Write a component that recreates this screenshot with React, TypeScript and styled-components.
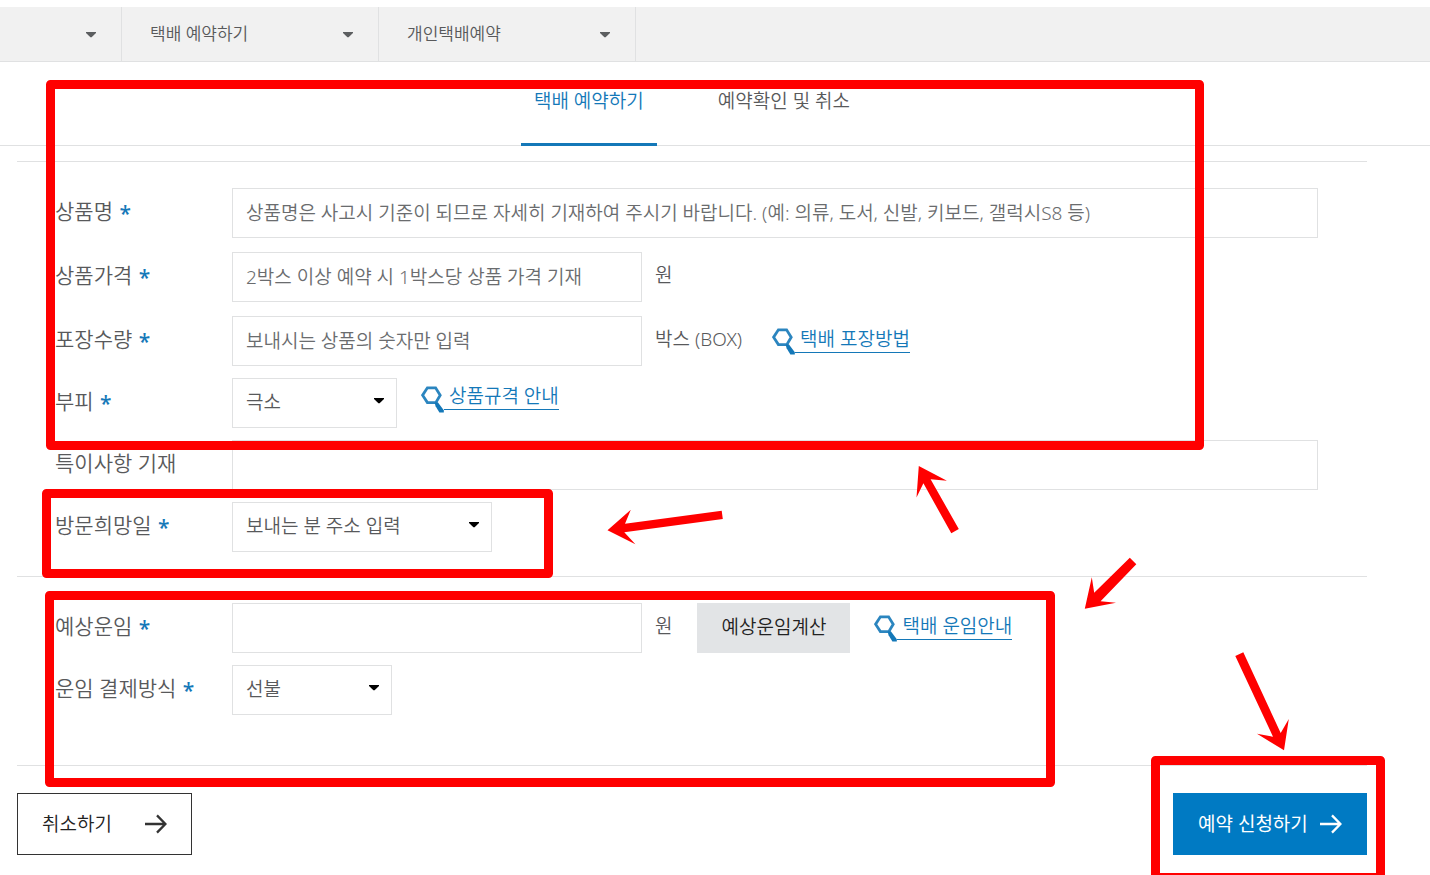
import React from "react";
import styled, { createGlobalStyle } from "styled-components";

const blue = "#1478b8";
const line = "#e0e1e2";

const GlobalStyle = createGlobalStyle`
  * { box-sizing: border-box; }
  body {
    margin: 0;
    background: #fff;
    color: #58595b;
    font-family: "Noto Sans", "Noto Sans CJK KR", sans-serif;
    font-size: 19px;
    font-weight: 350;
    line-height: 28px;
  }
  button, input, select { font: inherit; color: inherit; margin: 0; }
`;

const Page = styled.div`
  position: relative;
  min-height: 100vh;
  padding-top: 7px;
  overflow: hidden;
`;

const Breadcrumb = styled.nav`
  display: flex;
  height: 55px;
  background: #f1f1f1;
  border-bottom: 1px solid ${line};
`;

const Crumb = styled.button<{ $short?: boolean }>`
  display: flex;
  align-items: center;
  justify-content: space-between;
  width: ${(p) => (p.$short ? 122 : 257)}px;
  padding: 0 25px 0 28px;
  border: 0;
  border-right: 1px solid ${line};
  background: none;
  font-size: 17px;
  text-align: left;
  > svg { margin-top: 2px; }
`;

const TabBar = styled.nav`
  display: flex;
  justify-content: center;
  gap: 48px;
  height: 84px;
  padding: 0 63px 0 17px;
  border-bottom: 1px solid ${line};
`;

const Tab = styled.a<{ $active?: boolean }>`
  height: 84px;
  padding: 25px 13px 0;
  border-bottom: 3px solid ${(p) => (p.$active ? blue : "transparent")};
  color: ${(p) => (p.$active ? blue : "inherit")};
  text-decoration: none;
`;

const Form = styled.form`
  margin: 15px 63px 0 17px;
`;

const Section = styled.section<{ $last?: boolean }>`
  display: flex;
  flex-direction: column;
  gap: 12px;
  padding: 26px 49px ${(p) => (p.$last ? 50 : 24)}px 38px;
  border-top: 1px solid ${line};
`;

const Row = styled.div<{ $spaced?: boolean }>`
  display: flex;
  align-items: center;
  height: 50px;
  margin-bottom: ${(p) => (p.$spaced ? 2 : 0)}px;
`;

const Label = styled.label`
  flex: 0 0 177px;
  padding-bottom: 5px;
  font-size: 21px;
`;

const Required = styled.span`
  margin-left: 1px;
  color: ${blue};
  font-weight: 500;
  line-height: 20px;
  vertical-align: -2px;
`;

const TextInput = styled.input<{ $wide?: boolean }>`
  flex: ${(p) => (p.$wide ? "1 1 0" : "0 0 410px")};
  min-width: 0;
  height: 50px;
  padding: 0 13px 1px;
  border: 1px solid ${line};
  background: #fff;
  &::placeholder { color: #6a6c6e; opacity: 1; }
`;

const SelectBox = styled.div<{ $width: number }>`
  display: grid;
  flex: 0 0 ${(p) => p.$width}px;
  align-items: center;
  > * { grid-area: 1 / 1; }
  > svg { justify-self: end; margin: 0 13px 4px 0; pointer-events: none; }
`;

const Select = styled.select`
  appearance: none;
  width: 100%;
  height: 50px;
  padding: 0 30px 3px 13px;
  border: 1px solid ${line};
  border-radius: 0;
  background: #fff;
`;

const Unit = styled.span`
  padding: 0 0 5px 13px;
`;

const HelpLink = styled.a<{ $raised?: boolean; $gap: number }>`
  display: flex;
  align-items: center;
  margin-left: ${(p) => p.$gap}px;
  padding-bottom: ${(p) => (p.$raised ? 12 : 3)}px;
  color: ${blue};
  text-decoration: none;
  > svg { margin-top: 4px; }
`;

const HelpText = styled.span`
  height: 26px;
  padding-left: 5px;
  border-bottom: 1px solid ${blue};
  line-height: 25px;
`;

const CalcButton = styled.button`
  width: 153px;
  height: 50px;
  margin-left: 25px;
  padding: 0 0 3px;
  border: 0;
  background: #e2e4e6;
  color: #222;
`;

const Actions = styled.div`
  display: flex;
  justify-content: space-between;
  padding-top: 27px;
  border-top: 1px solid ${line};
`;

const ActionButton = styled.button<{ $primary?: boolean }>`
  display: flex;
  align-items: center;
  justify-content: space-between;
  width: ${(p) => (p.$primary ? 194 : 175)}px;
  height: 62px;
  padding: 0 24px;
  border: 1px solid ${(p) => (p.$primary ? "#007ac3" : "#333")};
  background: ${(p) => (p.$primary ? "#007ac3" : "#fff")};
  color: ${(p) => (p.$primary ? "#fff" : "#222")};
  font-weight: ${(p) => (p.$primary ? 400 : 350)};
`;

const Annotations = styled.svg`
  position: absolute;
  inset: 0;
  width: 100%;
  height: 100%;
  pointer-events: none;
`;

const Caret = ({ color = "#000" }: { color?: string }) => (
  <svg width="10" height="6" viewBox="0 0 10 6" aria-hidden="true">
    <path d="M0 0H10V1L5.6 5.2H4.4L0 1Z" fill={color} />
  </svg>
);

const Lens = () => (
  <svg width="23" height="27" viewBox="0 0 23 27" aria-hidden="true">
    <path d="M6.4 1.8H14.6L19.2 9.2L14.8 16.6H6.4L1.6 9.2Z" fill="none" stroke={blue} strokeWidth="2.8" strokeOpacity="0.9" />
    <path d="M13.6 16.5L16.8 16.2L22.8 24.2V26.6H18.4L14.6 20.2Z" fill={blue} />
  </svg>
);

const Arrow = ({ color }: { color: string }) => (
  <svg width="23" height="20" viewBox="0 0 23 20" aria-hidden="true">
    <path d="M1 10H21M13 1.4L21.4 10L13 18.6" fill="none" stroke={color} strokeWidth="2.3" />
  </svg>
);

const Field = ({ id, label, required, spaced, children }: {
  id: string; label: string; required?: boolean; spaced?: boolean; children: React.ReactNode;
}) => (
  <Row $spaced={spaced}>
    <Label htmlFor={id}>{label}{required && <Required> *</Required>}</Label>
    {children}
  </Row>
);

const Dropdown = ({ id, width, value }: { id: string; width: number; value: string }) => (
  <SelectBox $width={width}>
    <Select id={id}><option>{value}</option></Select>
    <Caret />
  </SelectBox>
);

const Help = ({ text, raised, gap = 24 }: { text: string; raised?: boolean; gap?: number }) => (
  <HelpLink href="#" $raised={raised} $gap={gap}><Lens /><HelpText>{text}</HelpText></HelpLink>
);

export default function App() {
  return (
    <>
      <GlobalStyle />
      <Page>
        <Breadcrumb>
          <Crumb type="button" $short aria-label="메뉴"><span /><Caret color="#5c5e60" /></Crumb>
          <Crumb type="button">택배 예약하기<Caret color="#5c5e60" /></Crumb>
          <Crumb type="button">개인택배예약<Caret color="#5c5e60" /></Crumb>
        </Breadcrumb>
        <TabBar>
          <Tab href="#" $active>택배 예약하기</Tab>
          <Tab href="#">예약확인 및 취소</Tab>
        </TabBar>
        <Form>
          <Section>
            <Field id="name" label="상품명" required spaced>
              <TextInput id="name" $wide placeholder="상품명은 사고시 기준이 되므로 자세히 기재하여 주시기 바랍니다. (예: 의류, 도서, 신발, 키보드, 갤럭시S8 등)" />
            </Field>
            <Field id="price" label="상품가격" required spaced>
              <TextInput id="price" placeholder="2박스 이상 예약 시 1박스당 상품 가격 기재" />
              <Unit>원</Unit>
            </Field>
            <Field id="count" label="포장수량" required>
              <TextInput id="count" placeholder="보내시는 상품의 숫자만 입력" />
              <Unit>박스 (BOX)</Unit>
              <Help text="택배 포장방법" gap={30} />
            </Field>
            <Field id="volume" label="부피" required>
              <Dropdown id="volume" width={165} value="극소" />
              <Help text="상품규격 안내" raised />
            </Field>
            <Field id="note" label="특이사항 기재">
              <TextInput id="note" $wide />
            </Field>
            <Field id="date" label="방문희망일" required>
              <Dropdown id="date" width={260} value="보내는 분 주소 입력" />
            </Field>
          </Section>
          <Section $last>
            <Field id="fare" label="예상운임" required>
              <TextInput id="fare" />
              <Unit>원</Unit>
              <CalcButton type="button">예상운임계산</CalcButton>
              <Help text="택배 운임안내" />
            </Field>
            <Field id="payment" label="운임 결제방식" required>
              <Dropdown id="payment" width={160} value="선불" />
            </Field>
          </Section>
          <Actions>
            <ActionButton type="button">취소하기<Arrow color="#333" /></ActionButton>
            <ActionButton type="submit" $primary>예약 신청하기<Arrow color="#fff" /></ActionButton>
          </Actions>
        </Form>
        <Annotations aria-hidden="true">
          <g fill="none" stroke="#f00" strokeWidth="9" strokeLinejoin="round">
            <rect x="50.5" y="84.5" width="1149" height="361" />
            <rect x="46.5" y="493.5" width="502" height="80" />
            <rect x="49.5" y="595.5" width="1001" height="187" />
            <rect x="1155.5" y="760.5" width="225" height="117" />
          </g>
          <g fill="#f00">
            <path d="M607.5 530.3L630.8 509.7L625 523.7L721.7 510.7L722.8 519L624.3 532.3L635.4 544.3Z" />
            <path d="M918.8 466L946.9 480.7L930.6 479.3L958.8 529L951.3 533.3L923.4 483.3L916.5 497.5Z" />
            <path d="M1084.8 608.8L1091.8 577.3L1094.2 592.7L1129.8 557.7L1136.3 564.3L1100.6 601.3L1116 602.7Z" />
            <path d="M1284 750.3L1288.8 719L1280.7 733L1243.3 652.3L1235.3 656L1273 736.7L1257 733.7Z" />
          </g>
        </Annotations>
      </Page>
    </>
  );
}
